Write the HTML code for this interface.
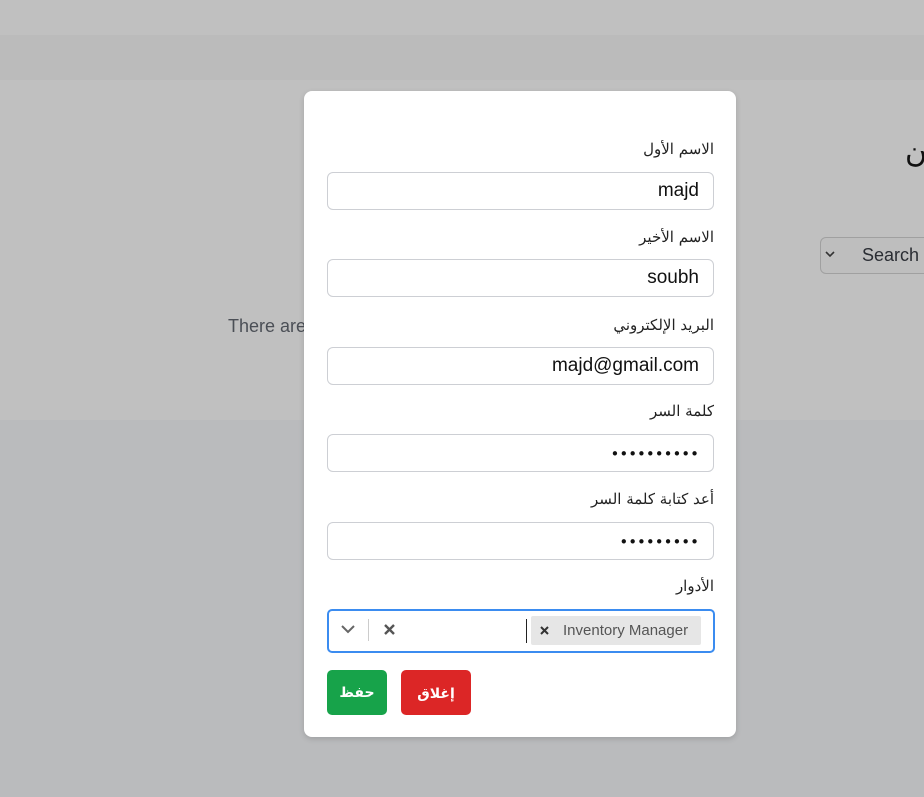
<!DOCTYPE html>
<html><head><meta charset="utf-8"><style>
body{margin:0;width:924px;height:797px;overflow:hidden;background:#babbbd;font-family:"Liberation Sans","DejaVu Sans",sans-serif;position:relative}
.a{position:absolute}
.lab{position:absolute;right:210px;font-size:15px;color:#222;font-family:"DejaVu Serif","Liberation Serif",serif}
.inp{position:absolute;left:327px;width:385px;height:36px;border:1px solid #cdcfd4;border-radius:6px;background:#fff;text-align:right;box-sizing:content-box;font-size:19px;line-height:36px;color:#111}
.inp span{padding-right:14px}
.pw{font-size:15px;letter-spacing:0px;font-family:"DejaVu Sans",sans-serif;line-height:38px}
</style></head><body>
<div class="a" style="left:0;top:0;width:924px;height:35px;background:#c0c0c0"></div>
<div class="a" style="left:0;top:35px;width:924px;height:45px;background:#bbbbbb"></div>
<div class="a" style="left:0;top:80px;width:924px;height:340px;background:#c0c0c0"></div>
<div class="a" style="left:905px;top:135px;font-size:30px;color:#111;font-family:'DejaVu Serif',serif">ن</div>
<div class="a" style="left:820px;top:237px;width:120px;height:35px;border:1px solid #a0a0a0;border-radius:6px;background:#bebebe"></div>
<svg class="a" style="left:825px;top:251px" width="10" height="7"><path d="M1 1l4 4 4-4" stroke="#333" stroke-width="1.6" fill="none"/></svg>
<div class="a" style="left:862px;top:245px;font-size:18px;color:#2a2d33">Search</div>
<div class="a" style="left:228px;top:316px;font-size:18px;color:#4b4f56">There are</div>
<div class="a" style="left:304px;top:91px;width:432px;height:646px;background:#fff;border-radius:8px;box-shadow:0 2px 6px rgba(0,0,0,.15)"></div>
<div class="lab" style="top:140px">الاسم الأول</div>
<div class="inp" style="top:172px"><span>majd</span></div>
<div class="lab" style="top:228px">الاسم الأخير</div>
<div class="inp" style="top:259px"><span>soubh</span></div>
<div class="lab" style="top:316px">البريد الإلكتروني</div>
<div class="inp" style="top:347px"><span>majd@gmail.com</span></div>
<div class="lab" style="top:402px">كلمة السر</div>
<div class="inp pw" style="top:434px"><span>••••••••••</span></div>
<div class="lab" style="top:490px">أعد كتابة كلمة السر</div>
<div class="inp pw" style="top:522px"><span>•••••••••</span></div>
<div class="lab" style="top:577px">الأدوار</div>
<div class="a" style="left:327px;top:609px;width:384px;height:40px;border:2px solid #3b8cf0;border-radius:5px;background:#fff"></div>
<svg class="a" style="left:340px;top:623px" width="16" height="12"><path d="M2 3l6 6 6-6" stroke="#666" stroke-width="2" fill="none"/></svg>
<div class="a" style="left:368px;top:619px;width:1px;height:22px;background:#ccc"></div>
<svg class="a" style="left:383px;top:623px" width="13" height="13"><path d="M2 2l9 9M11 2l-9 9" stroke="#555" stroke-width="2.4"/></svg>
<div class="a" style="left:526px;top:619px;width:1px;height:24px;background:#222"></div>
<div class="a" style="left:531px;top:616px;width:170px;height:29px;background:#e6e6e6;border-radius:2px"></div>
<svg class="a" style="left:540px;top:626px" width="9" height="9"><path d="M1 1l7 7M8 1l-7 7" stroke="#333" stroke-width="2"/></svg>
<div class="a" style="left:563px;top:622px;font-size:15px;color:#555">Inventory Manager</div>
<div class="a" style="left:327px;top:670px;width:60px;height:45px;background:#17a34a;border-radius:5px;color:#fff;font-weight:bold;font-size:14px;text-align:center;line-height:44px">حفظ</div>
<div class="a" style="left:401px;top:670px;width:70px;height:45px;background:#dc2626;border-radius:5px;color:#fff;font-weight:bold;font-size:14px;text-align:center;line-height:47px">إغلاق</div>
</body></html>
